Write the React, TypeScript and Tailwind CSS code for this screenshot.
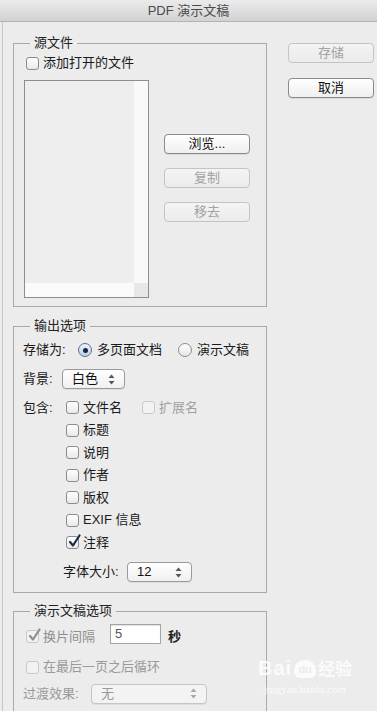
import type { ReactNode } from 'react';

function Check({ checked, disabled }: { checked?: boolean; disabled?: boolean }) {
  return (
    <span
      className={`relative block w-[13px] h-[13px] shrink-0 rounded-[3px] border ${
        disabled ? 'border-[#c9c9c9] bg-[#f2f2f2]' : 'border-[#8c8c8c] bg-linear-to-b from-white to-[#e9e9e9]'
      } ${checked && !disabled ? 'border-[#6e7f99] from-[#f4f8fd] to-[#cfdcee]' : ''}`}
    >
      {checked && (
        <svg className="absolute left-[1px] -top-[3px]" width="13" height="14" viewBox="0 0 13 14">
          <path
            d="M2 8 L5 11.5 L11.5 1.5"
            fill="none"
            stroke={disabled ? '#8e8e8e' : '#1b2a4a'}
            strokeWidth="2.2"
            strokeLinecap="round"
            strokeLinejoin="round"
          />
        </svg>
      )}
    </span>
  );
}

function Radio({ on }: { on?: boolean }) {
  return (
    <span
      className={`flex items-center justify-center w-[14px] h-[14px] shrink-0 rounded-full border ${
        on ? 'border-[#5f6f8a] bg-linear-to-b from-[#eef4fc] to-[#bcd0ea]' : 'border-[#8c8c8c] bg-linear-to-b from-white to-[#e6e6e6]'
      }`}
    >
      {on && <span className="block w-[5px] h-[5px] rounded-full bg-[#1b2436]" />}
    </span>
  );
}

function Arrows({ dim }: { dim?: boolean }) {
  const c = dim ? '#a9a9a9' : '#555';
  return (
    <svg width="7" height="11" viewBox="0 0 7 11">
      <path d="M3.5 0.5 L6.5 4 L0.5 4 Z" fill={c} />
      <path d="M3.5 10.5 L6.5 7 L0.5 7 Z" fill={c} />
    </svg>
  );
}

function Select({ value, w, dim }: { value: string; w: string; dim?: boolean }) {
  return (
    <div
      className={`${w} h-[20px] flex items-center justify-between pl-[9px] pr-[9px] rounded-[4px] border ${
        dim ? 'border-[#c6c6c6] bg-[#f3f3f3] text-[#9a9a9a]' : 'border-[#9a9a9a] bg-linear-to-b from-white to-[#f0f0f0] text-[#111]'
      } shadow-[0_1px_0_rgba(0,0,0,0.06)]`}
    >
      <span>{value}</span>
      <Arrows dim={dim} />
    </div>
  );
}

function Btn({ label, disabled }: { label: string; disabled?: boolean }) {
  return (
    <div
      className={`w-[86px] h-[20px] flex items-center justify-center rounded-[4px] border ${
        disabled
          ? 'border-[#c4c4c4] bg-linear-to-b from-[#f4f4f4] to-[#ebebeb] text-[#a3a3a3]'
          : 'border-[#8a8a8a] bg-linear-to-b from-white to-[#efefef] text-[#111] shadow-[0_1px_0_rgba(0,0,0,0.08)]'
      }`}
    >
      {label}
    </div>
  );
}

function Group({ title, className, children }: { title: string; className: string; children: ReactNode }) {
  return (
    <div className={`shrink-0 border border-[#a9a9a9] ${className}`}>
      <div className="-mt-[9px] ml-[16px] w-fit px-[4px] bg-[#ececec] h-[16px] leading-[16px] text-[#222]">{title}</div>
      {children}
    </div>
  );
}

function CheckRow({ label, h, checked }: { label: string; h: string; checked?: boolean }) {
  return (
    <div className={`${h} flex items-center pl-[52px] gap-[4px]`}>
      <Check checked={checked} />
      <span>{label}</span>
    </div>
  );
}

export default function App() {
  return (
    <div className="relative w-[377px] h-[711px] overflow-hidden bg-[#ececec] text-[13px] text-[#1a1a1a] font-['Liberation_Sans','Noto_Sans_CJK_SC',sans-serif]">
      {/* Title bar */}
      <div className="h-[22px] flex items-center justify-center bg-linear-to-b from-[#ebebeb] to-[#d2d2d2] border-b border-[#b4b4b4] text-[#4a4a4a]">
        PDF 演示文稿
      </div>

      <div className="flex ml-[2px] border-l border-[#c6c6c6] h-[689px]">
        {/* Left column */}
        <div className="ml-[10px] mt-[21px] w-[254px] shrink-0 flex flex-col">
          <Group title="源文件" className="h-[264px]">
            <div className="mt-[4px] h-[16px] flex items-center pl-[12px] gap-[4px]">
              <Check />
              <span>添加打开的文件</span>
            </div>
            <div className="mt-[9px] pl-[10px] flex">
              <div className="w-[125px] h-[218px] border border-[#8e8e8e] bg-[#eeeeee] flex flex-col">
                <div className="flex-1 flex">
                  <div className="flex-1" />
                  <div className="w-[14px] bg-[#f9f9f9]" />
                </div>
                <div className="h-[14px] flex">
                  <div className="flex-1 bg-[#fafafa]" />
                  <div className="w-[14px] bg-[#e8e8e8]" />
                </div>
              </div>
              <div className="ml-[15px] pt-[54px] flex flex-col gap-[14px]">
                <Btn label="浏览..." />
                <Btn label="复制" disabled />
                <Btn label="移去" disabled />
              </div>
            </div>
          </Group>

          <Group title="输出选项" className="mt-[19px] h-[267px]">
            <div className="mt-[8px] h-[16px] flex items-center pl-[9px]">
              <span className="w-[55px]">存储为:</span>
              <div className="w-[100px] flex items-center gap-[5px]">
                <Radio on />
                <span>多页面文档</span>
              </div>
              <div className="flex items-center gap-[5px]">
                <Radio />
                <span>演示文稿</span>
              </div>
            </div>
            <div className="mt-[11px] h-[20px] flex items-center pl-[9px]">
              <span className="w-[39px]">背景:</span>
              <Select value="白色" w="w-[63px]" />
            </div>
            <div className="mt-[7px] h-[23px] flex items-center pl-[9px]">
              <span className="w-[43px]">包含:</span>
              <div className="w-[76px] flex items-center gap-[4px]">
                <Check />
                <span>文件名</span>
              </div>
              <div className="flex items-center gap-[4px] text-[#a0a0a0]">
                <Check disabled />
                <span>扩展名</span>
              </div>
            </div>
            <CheckRow label="标题" h="h-[22px]" />
            <CheckRow label="说明" h="h-[23px]" />
            <CheckRow label="作者" h="h-[22px]" />
            <CheckRow label="版权" h="h-[23px]" />
            <CheckRow label="EXIF 信息" h="h-[22px]" />
            <CheckRow label="注释" h="h-[23px]" checked />
            <div className="mt-[8px] h-[20px] flex items-center pl-[49px]">
              <span className="w-[64px]">字体大小:</span>
              <Select value="12" w="w-[65px]" />
            </div>
          </Group>

          <Group title="演示文稿选项" className="mt-[18px] h-[140px]">
            <div className="mt-[5px] h-[20px] flex items-center pl-[12px]">
              <div className="w-[84px] flex items-center gap-[4px] pt-[5px] text-[#8f8f8f]">
                <Check checked disabled />
                <span>换片间隔</span>
              </div>
              <div className="w-[51px] h-[20px] flex items-center pl-[4px] bg-white border border-[#a4a4a4] shadow-[inset_0_1px_1px_rgba(0,0,0,0.12)] text-[#555]">
                5
              </div>
              <span className="ml-[7px] pt-[5px] text-[#222] font-bold">秒</span>
            </div>
            <div className="mt-[15px] h-[16px] flex items-center pl-[12px] gap-[4px] text-[#9a9a9a]">
              <Check disabled />
              <span>在最后一页之后循环</span>
            </div>
            <div className="mt-[9px] h-[19px] flex items-center pl-[9px] text-[#9a9a9a]">
              <span className="w-[68px]">过渡效果:</span>
              <Select value="无" w="w-[116px]" dim />
            </div>
          </Group>
        </div>

        {/* Right column */}
        <div className="ml-[21px] mt-[21px] flex flex-col gap-[15px]">
          <Btn label="存储" disabled />
          <Btn label="取消" />
        </div>
      </div>

      {/* Watermark */}
      <div className="absolute left-[258px] top-[658px] flex flex-col items-center text-white opacity-80 pointer-events-none">
        <div className="flex items-end leading-none">
          <span className="text-[20px] font-bold tracking-[1px]">Bai</span>
          <span className="mx-[2px] w-[22px] h-[18px] rounded-t-[10px] rounded-b-[6px] bg-white text-[#ececec] text-[11px] font-bold flex items-center justify-center">du</span>
          <span className="text-[17px] font-bold">经验</span>
        </div>
        <span className="text-[11px] mt-[3px] font-['Liberation_Serif',serif]">jingyan.baidu.com</span>
      </div>
    </div>
  );
}
